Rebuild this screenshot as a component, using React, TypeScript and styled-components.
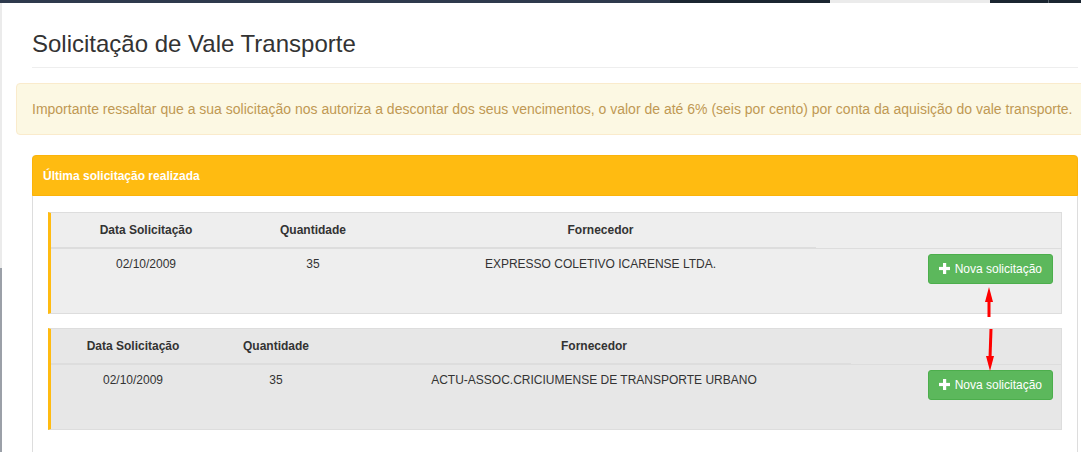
import React from 'react';
import styled, { createGlobalStyle } from 'styled-components';

const GlobalStyle = createGlobalStyle`
  html, body {
    margin: 0;
    padding: 0;
    height: 452px;
    overflow: hidden;
    background: #fff;
    font-family: 'Liberation Sans', Arial, Helvetica, sans-serif;
    color: #333;
  }
  * { box-sizing: border-box; }
`;

type Row = {
  data: string;
  quantidade: string;
  fornecedor: string;
  cols: number[];
  shade: string;
};

const rows: Row[] = [
  {
    data: '02/10/2009',
    quantidade: '35',
    fornecedor: 'EXPRESSO COLETIVO ICARENSE LTDA.',
    cols: [190, 144, 431],
    shade: '#eeeeee',
  },
  {
    data: '02/10/2009',
    quantidade: '35',
    fornecedor: 'ACTU-ASSOC.CRICIUMENSE DE TRANSPORTE URBANO',
    cols: [164, 122, 514],
    shade: '#e7e7e7',
  },
];

const topSegments = [
  { w: 670, c: '#2e3a4d' },
  { w: 160, c: '#1b2631' },
  { w: 160, c: '#ebebeb' },
  { w: 58, c: '#1b2631' },
  { w: 1, c: '#56606a' },
  { w: 40, c: '#1b2631' },
];

export default function App() {
  return (
    <>
      <GlobalStyle />
      <TopBar>
        {topSegments.map((s, i) => (
          <TopSegment key={i} $w={s.w} $c={s.c} />
        ))}
      </TopBar>
      <Layout>
        <SideEdge>
          <EdgeLight />
          <EdgeDark />
        </SideEdge>
        <Main>
          <Title>Solicitação de Vale Transporte</Title>
          <Divider />
          <Alert>
            Importante ressaltar que a sua solicitação nos autoriza a descontar dos seus
            vencimentos, o valor de até 6% (seis por cento) por conta da aquisição do vale
            transporte.
          </Alert>
          <Panel>
            <PanelHeading>Última solicitação realizada</PanelHeading>
            <PanelBody>
              {rows.map((r, i) => (
                <Well key={i} $shade={r.shade}>
                  <Table>
                    <colgroup>
                      {r.cols.map((w, j) => (
                        <col key={j} style={{ width: w }} />
                      ))}
                      <col />
                    </colgroup>
                    <thead>
                      <tr>
                        <Th>Data Solicitação</Th>
                        <Th>Quantidade</Th>
                        <Th>Fornecedor</Th>
                        <Th $thin />
                      </tr>
                    </thead>
                    <tbody>
                      <tr>
                        <Td>{r.data}</Td>
                        <Td>{r.quantidade}</Td>
                        <Td>{r.fornecedor}</Td>
                        <ActionCell>
                          <GreenButton>
                            <PlusIcon />
                            Nova solicitação
                          </GreenButton>
                        </ActionCell>
                      </tr>
                    </tbody>
                  </Table>
                </Well>
              ))}
            </PanelBody>
          </Panel>
        </Main>
      </Layout>
      <Arrows width="1081" height="452" viewBox="0 0 1081 452">
        <line x1="989" y1="317" x2="989" y2="299" stroke="#f00" strokeWidth="3" />
        <polygon points="985,302 993,302 989,287" fill="#f00" />
        <line x1="991" y1="329" x2="990" y2="358" stroke="#f00" strokeWidth="3" />
        <polygon points="986,356 994,356 990,371" fill="#f00" />
      </Arrows>
    </>
  );
}

function PlusIcon() {
  return (
    <svg width="11" height="11" viewBox="0 0 11 11">
      <rect x="4" y="0" width="3.2" height="11" fill="#fff" />
      <rect x="0" y="3.9" width="11" height="3.2" fill="#fff" />
    </svg>
  );
}

const TopBar = styled.div`
  display: flex;
  height: 3px;
  width: 1081px;
`;

const TopSegment = styled.div<{ $w: number; $c: string }>`
  flex: 0 0 ${(p) => p.$w}px;
  background: ${(p) => p.$c};
`;

const Layout = styled.div`
  display: flex;
  width: 1081px;
`;

const SideEdge = styled.div`
  flex: 0 0 2px;
  display: flex;
  flex-direction: column;
`;

const EdgeLight = styled.div`
  height: 265px;
  background: #ebebeb;
`;

const EdgeDark = styled.div`
  height: 200px;
  background: #9ba0a8;
`;

const Main = styled.div`
  flex: 0 0 1046px;
  margin-left: 30px;
  padding-top: 28px;
`;

const Title = styled.h1`
  margin: 0;
  font-size: 24px;
  line-height: 26.4px;
  font-weight: 400;
  color: #333;
`;

const Divider = styled.hr`
  margin: 10px 0 15px;
  border: 0;
  border-top: 1px solid #eee;
`;

const Alert = styled.div`
  margin: 0 -30px 20px -16px;
  padding: 15px;
  background: #fcf8e3;
  border: 1px solid #faebcc;
  border-radius: 4px;
  color: #c09853;
  font-size: 14px;
  line-height: 20px;
  white-space: nowrap;
`;

const Panel = styled.div`
  border: 1px solid #ddd;
  border-top: 0;
  border-radius: 4px;
  padding-bottom: 20px;
`;

const PanelHeading = styled.div`
  background: #ffbb11;
  border: 1px solid #fbb30a;
  margin: 0 -1px;
  border-radius: 4px 4px 0 0;
  padding: 10px 10px 9px;
  color: #fff;
  font-size: 12px;
  font-weight: 700;
  line-height: 20px;
`;

const PanelBody = styled.div`
  padding: 16px 15px 15px;
  display: flex;
  flex-direction: column;
  gap: 14px;
`;

const Well = styled.div<{ $shade: string }>`
  background: ${(p) => p.$shade};
  border: 1px solid #ddd;
  border-left: 3px solid #ffbb11;
  height: 102px;
`;

const Table = styled.table`
  width: 100%;
  border-collapse: collapse;
  font-size: 12px;
  color: #333;
`;

const Th = styled.th<{ $thin?: boolean }>`
  padding: 8px;
  line-height: 18px;
  font-weight: 700;
  text-align: center;
  border-bottom: ${(p) => (p.$thin ? '1px' : '2px')} solid #ddd;
`;

const Td = styled.td`
  padding: 6px 8px 8px;
  line-height: 18px;
  text-align: center;
  vertical-align: top;
`;

const ActionCell = styled.td`
  padding: 5px 8px 0;
  text-align: right;
  vertical-align: top;
`;

const GreenButton = styled.button`
  display: inline-flex;
  align-items: center;
  gap: 5px;
  padding: 5px 10px;
  font-family: 'Liberation Sans', Arial, sans-serif;
  font-size: 12px;
  line-height: 18px;
  color: #fff;
  background: #5cb85c;
  border: 1px solid #4cae4c;
  border-radius: 3px;
  cursor: pointer;
`;

const Arrows = styled.svg`
  position: absolute;
  left: 0;
  top: 0;
  pointer-events: none;
`;
